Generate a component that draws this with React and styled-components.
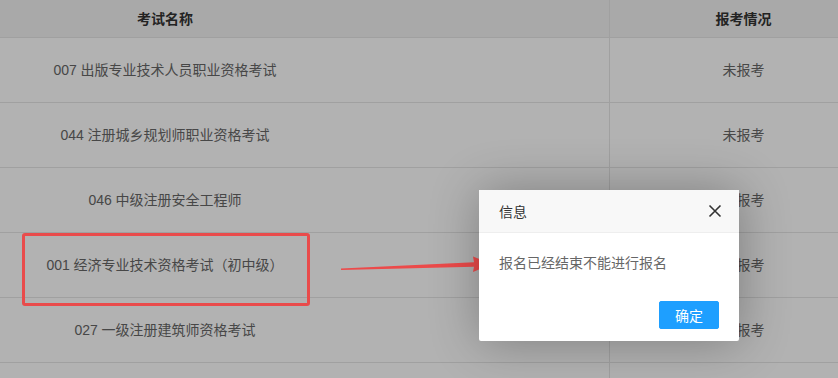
import React from "react";
import styled, { createGlobalStyle } from "styled-components";

const GlobalStyle = createGlobalStyle`
  html, body {
    margin: 0;
    padding: 0;
    background: #fff;
    overflow: hidden;
    font-family: "Liberation Sans", "Noto Sans CJK SC", sans-serif;
  }
`;

const Page = styled.div`
  position: relative;
  width: 838px;
  height: 378px;
  overflow: hidden;
`;

const Table = styled.table`
  border-collapse: collapse;
  margin-left: -279px;
  width: 1155px;
  table-layout: fixed;
  font-size: 14px;
  color: #666;
`;

const Head = styled.th`
  height: 35px;
  padding: 0 0 2px;
  background: #f2f2f2;
  color: #333;
  font-weight: bold;
  text-align: center;
  border-right: 1px solid #e6e6e6;
  border-bottom: 1px solid #e6e6e6;
  width: ${(p) => p.$w}px;
`;

const Cell = styled.td`
  height: 61px;
  padding: 0 0 3px;
  text-align: center;
  border-right: 1px solid #e6e6e6;
  border-bottom: 1px solid #e6e6e6;
`;

const Shade = styled.div`
  position: absolute;
  inset: 0;
  background: rgba(0, 0, 0, 0.3);
`;

const Highlight = styled.div`
  position: absolute;
  left: 22px;
  top: 233px;
  width: 282px;
  height: 67px;
  border: 3px solid #e94b4b;
  border-radius: 3px;
`;

const Arrow = styled.svg`
  position: absolute;
  left: 0;
  top: 0;
`;

const Dialog = styled.div`
  position: absolute;
  left: 479px;
  top: 190px;
  width: 260px;
  background: #fff;
  box-shadow: 1px 1px 50px rgba(0, 0, 0, 0.3);
  border-radius: 2px;
`;

const Title = styled.div`
  display: flex;
  align-items: center;
  justify-content: space-between;
  height: 42px;
  padding: 0 17px 0 20px;
  background: #f8f8f8;
  border-bottom: 1px solid #eee;
  color: #333;
  font-size: 14px;
`;

const Close = styled.svg`
  display: block;
`;

const Content = styled.div`
  padding: 18px 20px 21px;
  line-height: 24px;
  font-size: 14px;
  color: #666;
`;

const Buttons = styled.div`
  display: flex;
  justify-content: flex-end;
  padding: 5px 20px 12px;
`;

const Button = styled.button`
  height: 28px;
  padding: 0 15px 1px;
  border: 1px solid #1e9fff;
  background: #1e9fff;
  color: #fff;
  border-radius: 2px;
  font-family: inherit;
  font-size: 14px;
`;

const rows = [
  "007 出版专业技术人员职业资格考试",
  "044 注册城乡规划师职业资格考试",
  "046 中级注册安全工程师",
  "001 经济专业技术资格考试（初中级）",
  "027 一级注册建筑师资格考试",
  "",
];

export default function App() {
  return (
    <Page>
      <GlobalStyle />
      <Table>
        <thead>
          <tr>
            <Head $w={888}>考试名称</Head>
            <Head $w={267}>报考情况</Head>
          </tr>
        </thead>
        <tbody>
          {rows.map((name, i) => (
            <tr key={i}>
              <Cell>{name}</Cell>
              <Cell>{name ? "未报考" : ""}</Cell>
            </tr>
          ))}
        </tbody>
      </Table>
      <Shade />
      <Highlight />
      <Arrow width="838" height="378">
        <polygon
          points="341,268.6 474,262.2 473,256.5 492,264 473,272 474,266.8 341,270"
          fill="#ec4a4a"
        />
      </Arrow>
      <Dialog>
        <Title>
          信息
          <Close width="14" height="14" viewBox="0 0 14 14">
            <path d="M1.5 1.5 L12.5 12.5 M12.5 1.5 L1.5 12.5" stroke="#333" strokeWidth="1.6" />
          </Close>
        </Title>
        <Content>报名已经结束不能进行报名</Content>
        <Buttons>
          <Button>确定</Button>
        </Buttons>
      </Dialog>
    </Page>
  );
}
